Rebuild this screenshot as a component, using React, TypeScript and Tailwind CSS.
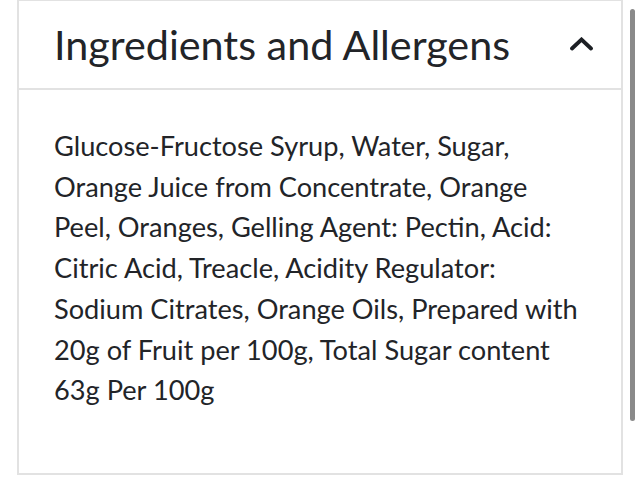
const ingredients =
  "Glucose-Fructose Syrup, Water, Sugar, Orange Juice from Concentrate, Orange Peel, Oranges, Gelling Agent: Pectin, Acid: Citric Acid, Treacle, Acidity Regulator: Sodium Citrates, Orange Oils, Prepared with 20g of Fruit per 100g, Total Sugar content 63g Per 100g";

export default function App() {
  return (
    <div className="relative w-[640px] h-[485px] bg-white overflow-hidden font-['Lato','Liberation_Sans',sans-serif] text-[#222428]">
      {/* Accordion card */}
      <div className="ml-[17px] w-[606px] h-[475px] border-2 border-[#e2e2e2] border-t">
        <div className="h-[89px] flex items-center justify-between pl-[35px] pr-[27px] border-b-2 border-[#e2e2e2]">
          <h2 className="text-[41.3px] leading-none">Ingredients and Allergens</h2>
          <svg width="25" height="14" viewBox="0 0 25 14" fill="none" className="-mt-[2px]">
            <path d="M3 11.5 L12.5 2.5 L22 11.5" stroke="#1c1f24" strokeWidth="3.8" strokeLinecap="round" strokeLinejoin="miter" />
          </svg>
        </div>
        <div className="pl-[35px] pr-[40px] pt-[36px]">
          <p className="text-[27.2px] leading-[40.7px]">{ingredients}</p>
        </div>
      </div>

      {/* Scrollbar thumb */}
      <div className="absolute left-[630px] top-[9px] w-[5px] h-[412px] rounded-full bg-[#8a8a8a]" />
    </div>
  );
}
